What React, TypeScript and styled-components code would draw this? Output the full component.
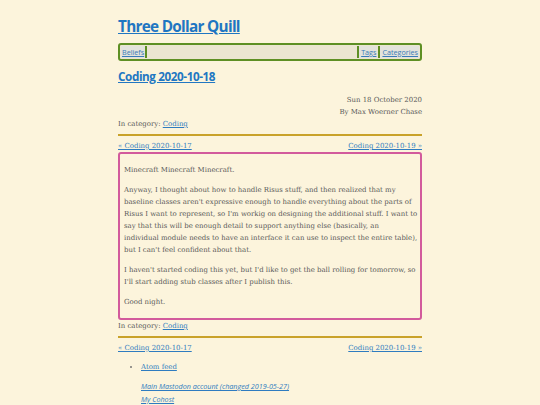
import React from "react";
import styled, { createGlobalStyle } from "styled-components";

const Global = createGlobalStyle`
  html, body { margin: 0; padding: 0; background: #fcf4dc; }
  body { font-family: "DejaVu Serif", serif; color: #585858; }
  a { color: #2f7cc0; }
`;

const Page = styled.div`
  width: 304px;
  margin: 0 auto;
  padding-top: 15px;
  font-size: 6.95px;
  line-height: 12px;
`;

const SiteTitle = styled.h1`
  margin: 0 0 6px;
  font-family: "Open Sans", sans-serif;
  font-weight: 700;
  font-size: 15.3px;
  line-height: 22px;
  letter-spacing: -0.7px;
  a { color: #1f76c2; }
`;

const Nav = styled.nav`
  display: flex;
  align-items: center;
  height: 12px;
  padding: 1px 1px;
  border: 2px solid #5e8f24;
  border-radius: 3px;
  background: #ebe5d1;
  font-family: "Open Sans", sans-serif;
  font-size: 7.2px;
  line-height: 12px;
`;

const NavLink = styled.a<{ $sep?: "left" | "right" }>`
  color: #3a7bb8;
  padding: 0 1px;
  ${(p) => (p.$sep === "right" ? "border-right: 2px solid #5e8f24; margin-right: 1px;" : "")}
  ${(p) => (p.$sep === "left" ? "border-left: 2px solid #5e8f24; margin-left: 1px; padding-left: 2px;" : "")}
  line-height: 12px;
  background: #e3e3dc;
`;

const Spacer = styled.div`
  flex: 1;
`;

const PostTitle = styled.h2`
  margin: 7px 0 10px;
  font-family: "Open Sans", sans-serif;
  font-weight: 700;
  font-size: 11.7px;
  line-height: 16px;
  letter-spacing: -0.4px;
  a { color: #2277c2; }
`;

const Meta = styled.div`
  text-align: right;
`;

const Line = styled.div``;

const Rule = styled.hr`
  border: none;
  height: 2px;
  background: #c9a22a;
  margin: 4px 0 4px;
`;

const PrevNext = styled.div`
  display: flex;
  justify-content: space-between;
`;

const Article = styled.div`
  border: 2px solid #d25a9c;
  border-radius: 3px;
  padding: 2px 1px 2px 4px;
  p { margin: 8px 0; }
`;

const List = styled.ul`
  margin: 7px 0 0;
  padding-left: 23px;
  li { line-height: 12px; }
  li::marker { color: #777; }
`;

const Social = styled.div`
  margin-top: 7px;
  padding-left: 23px;
  font-family: "Open Sans", sans-serif;
  font-style: italic;
  font-size: 7.2px;
  line-height: 12.5px;
`;

export default function App() {
  return (
    <>
      <Global />
      <Page>
        <SiteTitle>
          <a href="#">Three Dollar Quill</a>
        </SiteTitle>
        <Nav>
          <NavLink href="#" $sep="right">Beliefs</NavLink>
          <Spacer />
          <NavLink href="#" $sep="left">Tags</NavLink>
          <NavLink href="#" $sep="left">Categories</NavLink>
        </Nav>
        <PostTitle>
          <a href="#">Coding 2020-10-18</a>
        </PostTitle>
        <Meta>
          <Line>Sun 18 October 2020</Line>
          <Line>By Max Woerner Chase</Line>
        </Meta>
        <Line>
          In category: <a href="#">Coding</a>
        </Line>
        <Rule />
        <PrevNext>
          <a href="#">« Coding 2020-10-17</a>
          <a href="#">Coding 2020-10-19 »</a>
        </PrevNext>
        <Article>
          <p>Minecraft Minecraft Minecraft.</p>
          <p>
            Anyway, I thought about how to handle Risus stuff, and then realized that my baseline
            classes aren't expressive enough to handle everything about the parts of Risus I want to
            represent, so I'm workig on designing the additional stuff. I want to say that this will
            be enough detail to support anything else (basically, an
            <br />
            individual module needs to have an interface it can use to inspect the entire table),
            but I can't feel confident about that.
          </p>
          <p>
            I haven't started coding this yet, but I'd like to get the ball rolling for tomorrow, so
            I'll start adding stub classes after I publish this.
          </p>
          <p>Good night.</p>
        </Article>
        <Line>
          In category: <a href="#">Coding</a>
        </Line>
        <Rule />
        <PrevNext>
          <a href="#">« Coding 2020-10-17</a>
          <a href="#">Coding 2020-10-19 »</a>
        </PrevNext>
        <List>
          <li>
            <a href="#">Atom feed</a>
          </li>
        </List>
        <Social>
          <div><a href="#">Main Mastodon account (changed 2019-05-27)</a></div>
          <div><a href="#">My Cohost</a></div>
        </Social>
      </Page>
    </>
  );
}
